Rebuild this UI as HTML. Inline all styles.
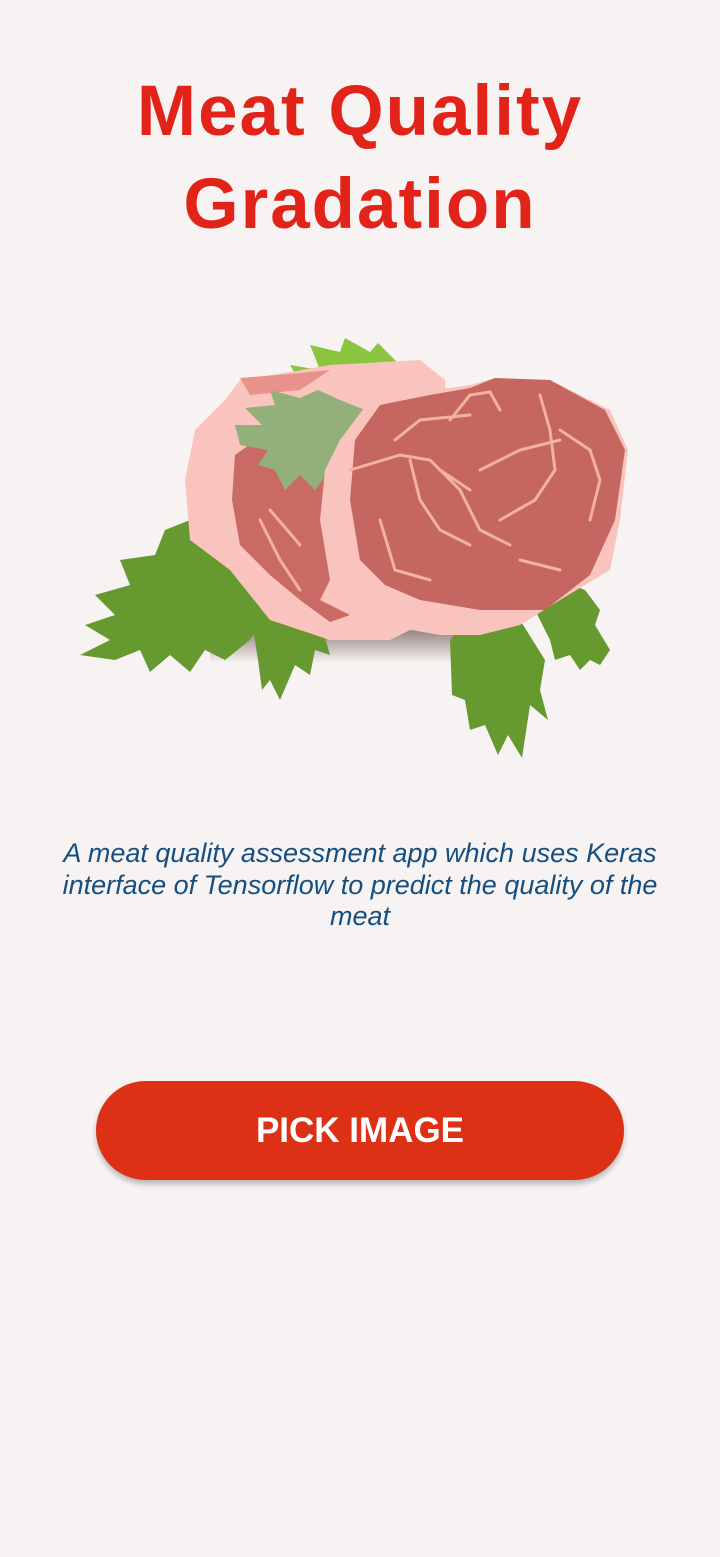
<!DOCTYPE html>
<html><head><meta charset="utf-8"><style>
html,body{margin:0;padding:0;background:#f7f3f2;width:720px;height:1557px;overflow:hidden}
body{position:relative;font-family:"Liberation Sans",sans-serif}
.t{position:absolute;left:0;width:720px;text-align:center;color:#e2231a;font-weight:bold;font-size:71px;letter-spacing:2px}
.d{position:absolute;left:40px;width:640px;text-align:center;color:#154e80;font-style:italic;font-size:27px;line-height:31.5px;top:838px}
.b{position:absolute;left:96px;top:1081px;width:528px;height:99px;border-radius:50px;background:#dd3116;box-shadow:0 4px 6px rgba(0,0,0,.25);color:#fff;font-weight:bold;font-size:35px;line-height:99px;text-align:center}
</style></head><body>
<div class="t" style="top:71px">Meat Quality</div>
<div class="t" style="top:164px">Gradation</div>
<svg style="position:absolute;left:0;top:0" width="720" height="800" viewBox="0 0 720 800">
<defs><linearGradient id="sh" x1="0" y1="0" x2="0" y2="1"><stop offset="0" stop-color="#8a7470"/><stop offset="1" stop-color="#f7f3f2"/></linearGradient></defs>
<rect x="210" y="625" width="250" height="38" fill="url(#sh)"/>
<path d="M80,655 L110,640 L85,625 L115,615 L95,595 L130,585 L120,560 L155,555 L165,530 L190,520 L240,540 L275,600 L250,640 L225,660 L205,650 L190,672 L170,655 L150,672 L140,650 L115,660 Z" fill="#66992f"/>
<path d="M250,610 L275,595 L320,620 L330,655 L315,650 L310,675 L295,665 L280,700 L270,680 L262,690 L258,660 Z" fill="#66992f"/>
<path d="M450,640 L470,615 L520,620 L545,660 L540,690 L548,720 L530,705 L522,758 L508,735 L498,755 L485,725 L470,730 L465,700 L452,695 Z" fill="#66992f"/>
<path d="M535,610 L560,580 L585,590 L600,610 L595,625 L610,650 L600,665 L590,660 L580,670 L570,655 L555,660 L550,640 Z" fill="#66992f"/>
<path d="M290,365 L320,370 L310,345 L340,352 L345,338 L370,352 L378,343 L400,365 L420,370 L435,395 L405,410 L350,420 L310,400 Z" fill="#8bc540"/>
<path d="M240,380 L290,372 L330,365 L420,360 L445,380 L450,500 L430,620 L390,640 L330,640 L270,620 L230,570 L190,540 L185,480 L195,430 L225,400 Z" fill="#f9c4bd"/>
<path d="M235,455 L270,430 L330,425 L360,470 L340,560 L320,600 L350,615 L330,622 L300,600 L270,575 L240,545 L232,500 Z" fill="#c96a64"/>
<path d="M240,378 L290,374 L330,370 L300,390 L250,395 Z" fill="#e7928a"/>
<path d="M235,425 L262,425 L245,408 L275,405 L270,390 L300,398 L318,390 L340,400 L365,410 L350,440 L330,470 L315,490 L300,475 L285,490 L275,470 L258,465 L268,450 L240,445 Z" fill="#93b07a"/>
<path d="M340,440 L370,400 L420,392 L470,385 L495,378 L550,380 L610,410 L628,450 L620,520 L610,570 L560,600 L520,625 L480,635 L440,635 L400,628 L360,605 L330,580 L320,520 L325,470 Z" fill="#f9c4bd"/>
<path d="M355,440 L380,405 L430,395 L470,388 L495,378 L550,380 L605,410 L625,450 L615,520 L590,575 L545,610 L480,610 L420,600 L385,585 L360,560 L350,500 Z" fill="#c56661"/>
<g fill="none" stroke="#f3b2a0" stroke-width="3" stroke-linecap="round">
<path d="M350,470 L400,455 L430,460 L460,490 L480,530 L510,545"/>
<path d="M410,460 L420,500 L440,530 L470,545"/>
<path d="M395,440 L420,420 L470,415 M450,420 L470,395 L490,392 L500,410"/>
<path d="M540,395 L550,430 L555,470 L535,500 L500,520"/>
<path d="M560,430 L590,450 L600,480 L590,520"/>
<path d="M480,470 L520,450 L560,440 M470,490 L440,470"/>
<path d="M260,520 L280,560 L300,590 M270,510 L300,545"/>
<path d="M380,520 L395,570 L430,580 M520,560 L560,570"/>
</g>
</svg>
<div class="d">A meat quality assessment app which uses Keras interface of Tensorflow to predict the quality of the meat</div>
<div class="b">PICK IMAGE</div>
</body></html>
